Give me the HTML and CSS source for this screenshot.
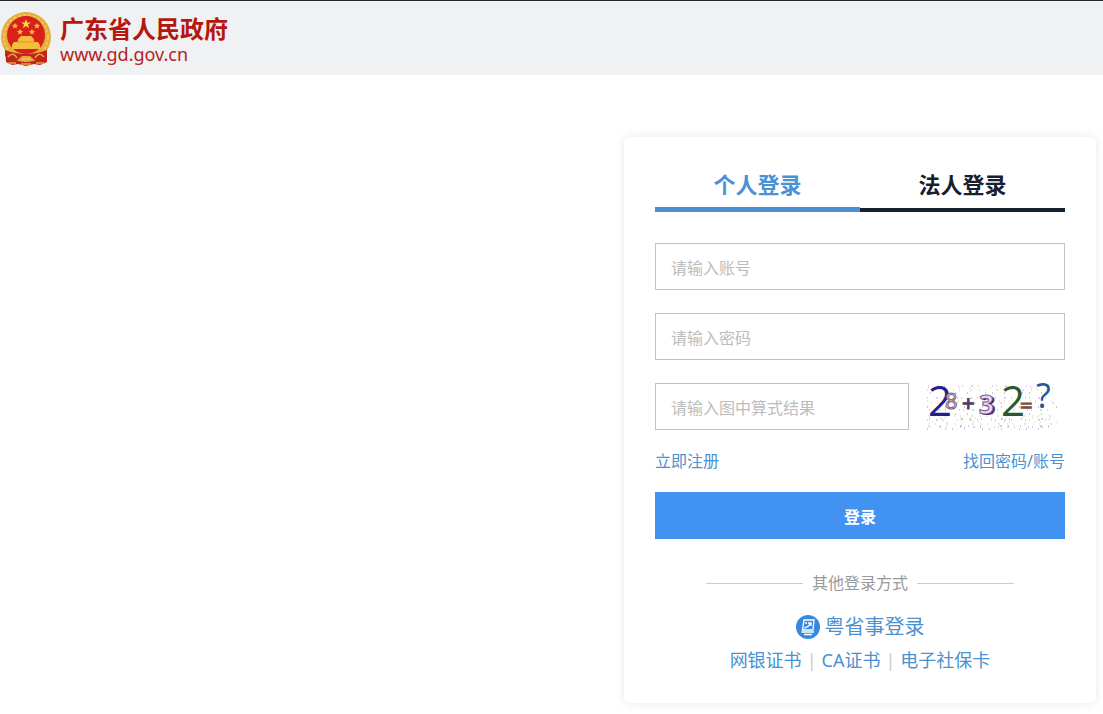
FILE: index.html
```html
<!DOCTYPE html>
<html lang="zh-CN">
<head>
<meta charset="utf-8">
<meta name="viewport" content="width=device-width, initial-scale=1">
<title>广东省人民政府</title>
<link rel="stylesheet" href="styles.css">
</head>
<body>
<header class="site-header">
  <svg class="emblem" viewBox="0 0 52 56" aria-hidden="true">
    <path d="M5 36 L47 36 L47 51 L40 54 L34 53 L26 55 L18 53 L12 54 L6 51Z" fill="#c3231c"/>
    <circle cx="26" cy="26" r="25" fill="#e5ae3b"/>
    <circle cx="26" cy="26" r="22" fill="none" stroke="#f0c75a" stroke-width="2" stroke-dasharray="3 2"/>
    <circle cx="26" cy="24" r="19" fill="#d9201a"/>
    <path d="M26 8l1.300 3.400h3.600l-2.900 2.200 1.100 3.600-3.100-2.200-3.100 2.200 1.100-3.600-2.900-2.200h3.600z" fill="#f8d34a"/>
    <g fill="#f3bd3d">
      <path d="M15 12l1 1.800 2 .2-1.500 1.400.4 2-1.900-1-1.900 1 .4-2-1.500-1.400 2-.2z"/>
      <path d="M37 12l1 1.800 2 .2-1.500 1.400.4 2-1.900-1-1.900 1 .4-2-1.500-1.400 2-.2z"/>
      <path d="M20 18l1 1.800 2 .2-1.500 1.400.4 2-1.900-1-1.900 1 .4-2-1.500-1.400 2-.2z"/>
      <path d="M32 18l1 1.800 2 .2-1.500 1.400.4 2-1.900-1-1.900 1 .4-2-1.500-1.400 2-.2z"/>
      <path d="M18 28l3-3h10l3 3v3h4l2 3v4H12v-4l2-3h4z"/>
    </g>
    <path d="M17 31h18" stroke="#e59030" stroke-width="1" fill="none"/>
    <path d="M5 39q21 8 42 0v6q-8 4-13 4l-4-4h-8l-4 4q-5 0-13-4z" fill="#bf241d"/>
    <path d="M8 46q5-6 9 1M18 50q8-9 16 0M35 47q4-7 9-1M8 52h8M36 52h8M21 53h10" fill="none" stroke="#e3a438" stroke-width="1.500"/>
  </svg>
  <div class="brand">
    <h1 class="brand-name">广东省人民政府</h1>
    <span class="brand-url">www.gd.gov.cn</span>
  </div>
</header>
<main class="page">
  <section class="card">
    <div class="tabs" role="tablist">
      <button class="tab tab-active" type="button" role="tab" aria-selected="true">个人登录</button>
      <button class="tab" type="button" role="tab" aria-selected="false">法人登录</button>
    </div>
    <form class="login-form">
      <input class="field" type="text" placeholder="请输入账号" aria-label="账号">
      <input class="field" type="password" placeholder="请输入密码" aria-label="密码">
      <div class="captcha-row">
        <input class="field" type="text" placeholder="请输入图中算式结果" aria-label="图中算式结果">
        <svg class="captcha" viewBox="0 0 130 47" role="img" aria-label="28+32=?">
          <g fill="none" stroke-width="1">
            <path d="M1 3H129M0 15H130M2 27H128M0 37H130M3 44H129" stroke="#b9a1dc" stroke-dasharray="1 8 2 5 1 13 1 3"/>
            <path d="M0 7H130M4 20H129M1 33H130M2 41H126" stroke="#e5b5cf" stroke-dasharray="1 5 1 10 2 7"/>
            <path d="M3 10H127M0 24H130M3 31H130M0 46H120" stroke="#8d8dcb" stroke-dasharray="1 17 1 6 1 11"/>
            <path d="M1 5H130M0 18H130M2 35H130M5 39H130" stroke="#dddc83" stroke-dasharray="1 9 1 4 1 15"/>
            <path d="M2 36H130M1 43H130" stroke="#a19ba8" stroke-dasharray="1 11 1 19 2 6"/>
          </g>
          <text class="glyph-large" x="1" y="33" fill="#23208b">2</text>
          <text class="glyph-small" x="18" y="26" fill="#f0dde5" stroke="#896177">8</text>
          <text class="glyph-small" x="35" y="28" fill="#513a67" stroke="#513a67">+</text>
          <text class="glyph-medium" x="54" y="32" fill="#482359">3</text>
          <text class="glyph-medium" x="52" y="31" fill="#eadcf3" stroke="#76528c">3</text>
          <text class="glyph-large" x="74" y="33" fill="#28582d">2</text>
          <text class="glyph-small" x="93" y="30" fill="#795247" stroke="#795247">=</text>
          <text class="glyph-large glyph-question" x="109" y="25" fill="#275494">?</text>
        </svg>
      </div>
      <div class="form-links">
        <a href="#">立即注册</a>
        <a href="#">找回密码/账号</a>
      </div>
      <button class="submit" type="submit">登录</button>
    </form>
    <div class="divider">其他登录方式</div>
    <a class="yss-login" href="#">
      <svg class="yss-icon" viewBox="0 0 24 24" aria-hidden="true">
        <circle cx="12" cy="12" r="12" fill="#3888df"/>
        <path d="M8 5h10l-1 10H6.500z" fill="none" stroke="#fff" stroke-width="1.300"/>
        <path d="M8.500 13q4-1 6.500-5M12 8h3v3M9 8h2M5.500 17h12.500M8 19.500h8" fill="none" stroke="#fff" stroke-width="1.300"/>
      </svg>
      <span>粤省事登录</span>
    </a>
    <nav class="other-links" aria-label="其他登录方式">
      <a href="#">网银证书</a>
      <a href="#">CA证书</a>
      <a href="#">电子社保卡</a>
    </nav>
  </section>
</main>
</body>
</html>
```
FILE: styles.css
```css
* { box-sizing: border-box; }

body {
  margin: 0;
  background: #fff;
  color: #17202e;
  font-family: "Noto Sans", "Noto Sans CJK SC", sans-serif;
  font-size: 16px;
  line-height: 24px;
}

a { color: #4b91cf; text-decoration: none; }

button, input { font: inherit; }

.site-header {
  display: flex;
  align-items: center;
  gap: 8px;
  min-height: 75px;
  padding-top: 2px;
  border-top: 1px solid #25272b;
  background: #f0f1f3;
}

.emblem { width: 52px; height: 56px; }

.brand {
  padding-top: 4px;
  color: #b32420;
}

.brand-name {
  margin: 0;
  color: #b5170f;
  font-size: 24px;
  line-height: 26px;
  font-weight: 700;
}

.brand-url {
  display: block;
  font-size: 18px;
  line-height: 24px;
}

.page {
  display: flex;
  justify-content: flex-end;
  padding: 62px 7px 11px;
}

.card {
  width: 100%;
  max-width: 472px;
  padding: 27px 31px;
  border-radius: 6px;
  background: #fff;
  box-shadow: 0 0 10px rgba(0, 0, 0, 0.1);
}

.tabs {
  display: flex;
  align-items: stretch;
  height: 48px;
}

.tab {
  display: flex;
  flex: 1;
  flex-direction: column;
  align-items: center;
  justify-content: space-between;
  padding: 4px 0 0;
  border: 0;
  background: none;
  color: #17202e;
  font-size: 22px;
  line-height: 32px;
  font-weight: 700;
}

.tab::after {
  content: "";
  width: 100%;
  height: 4px;
  background: #17202e;
}

.tab-active { color: #4b91d6; }

.tab-active::after {
  height: 5px;
  background: #4b8fd3;
}

.login-form {
  display: flex;
  flex-direction: column;
  gap: 23px;
  margin-top: 31px;
}

.field {
  width: 100%;
  min-width: 0;
  height: 47px;
  padding: 2px 15px 0;
  border: 1px solid #c3c3c6;
  border-radius: 0;
  background: #fff;
  color: #333;
}

.field::placeholder { color: #bcbcbc; opacity: 1; }

.captcha-row {
  display: flex;
  gap: 18px;
  padding-right: 8px;
}

.captcha-row .field { flex: 1; }

.captcha { flex: none; width: 130px; height: 47px; overflow: visible; }

.glyph-large { font: 42px "Open Sans", sans-serif; }
.glyph-medium { font: 700 26px "Open Sans", sans-serif; }
.glyph-small { font: 22px "Open Sans", sans-serif; }
.glyph-question { font-size: 34px; }

.form-links {
  display: flex;
  justify-content: space-between;
  margin: -4px 0;
}

.submit {
  height: 47px;
  padding: 2px 0 0;
  border: 0;
  background: #4292f2;
  color: #fff;
  font-weight: 700;
}

.divider {
  display: flex;
  align-items: center;
  gap: 9px;
  margin: 32px 51px 0;
  color: #999;
}

.divider::before,
.divider::after {
  content: "";
  flex: 1;
  height: 1px;
  background: #ccc;
}

.yss-login {
  display: flex;
  align-items: center;
  justify-content: center;
  gap: 5px;
  margin-top: 16px;
  font-size: 20px;
  line-height: 32px;
}

.yss-icon { width: 24px; height: 24px; }

.other-links {
  display: flex;
  justify-content: center;
  padding-top: 1px;
  font-size: 18px;
  line-height: 32px;
}

.other-links a + a::before {
  content: "|";
  margin: 0 5px;
  color: #ccc;
}
```
